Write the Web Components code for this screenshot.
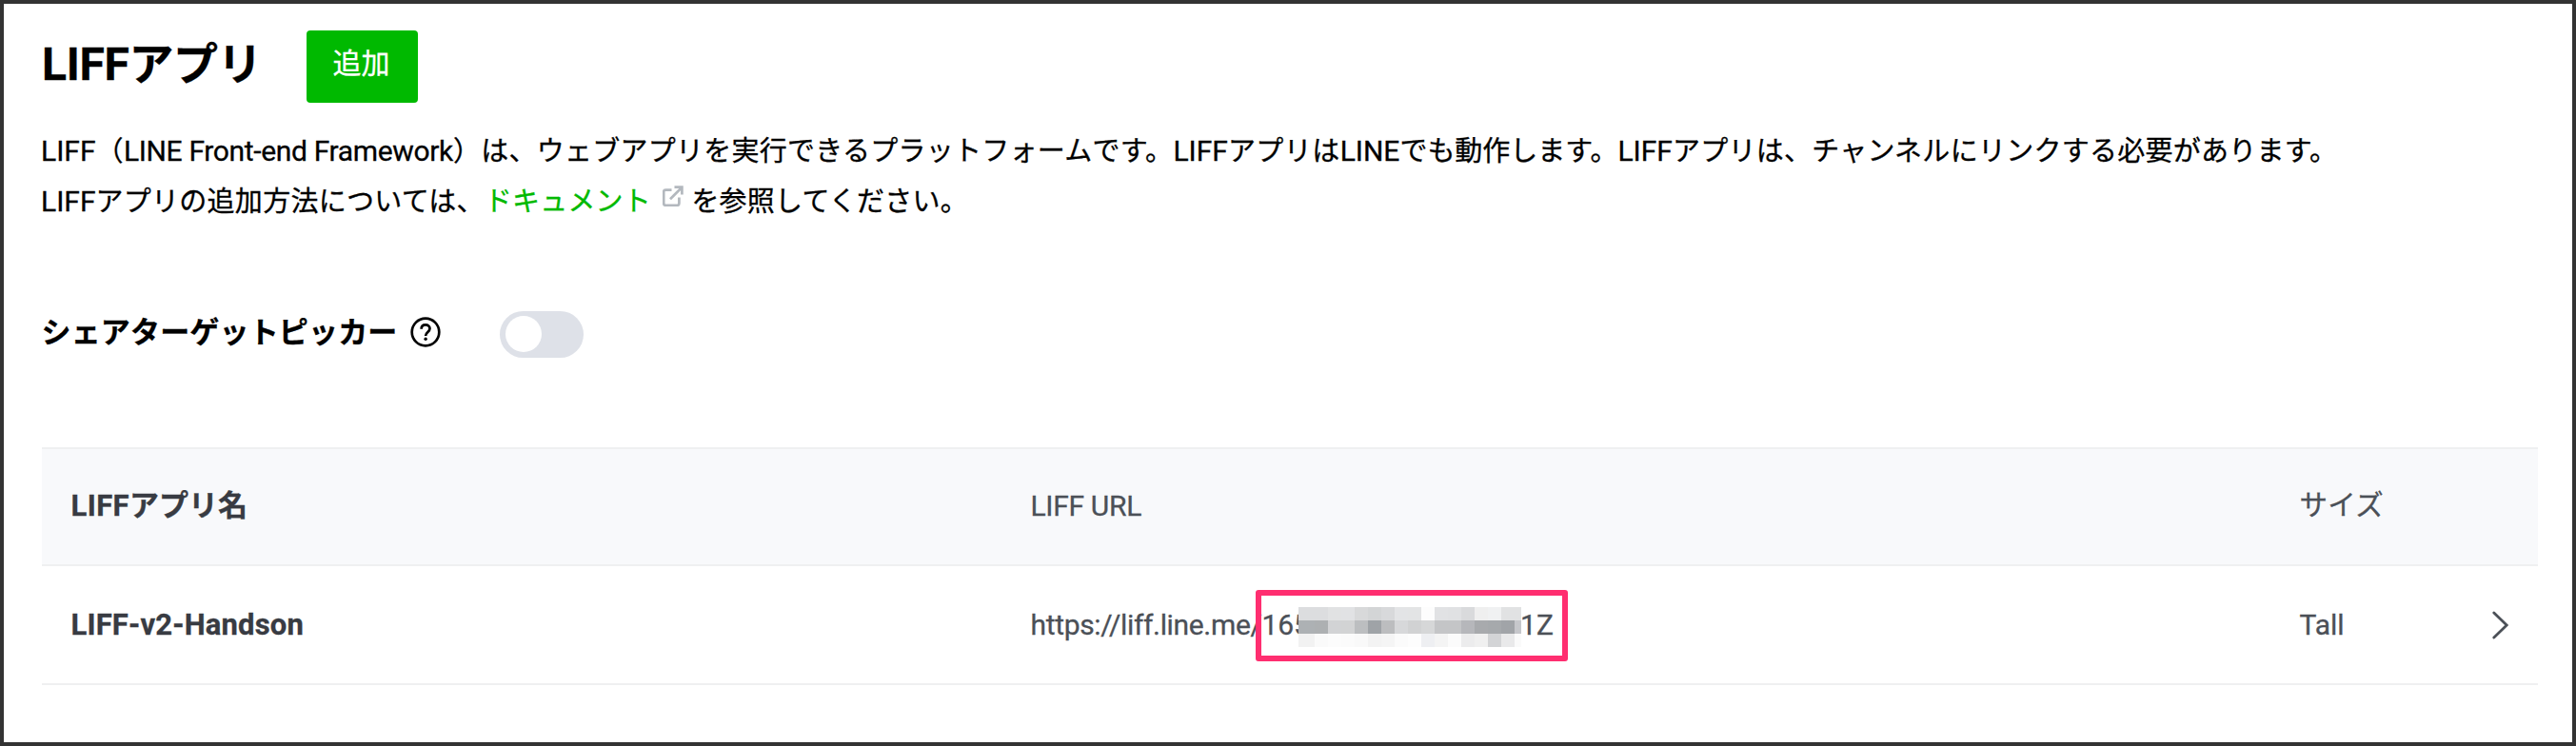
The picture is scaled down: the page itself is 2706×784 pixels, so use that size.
<!DOCTYPE html>
<html lang="ja">
<head>
<meta charset="utf-8">
<title>LIFFアプリ</title>
<style>
  html, body { margin: 0; height: 100%; }
  body { font-family: Roboto, "Noto Sans CJK JP", sans-serif; background: #fff; color: #000; }
</style>
</head>
<body>
<liff-page></liff-page>
<script>
// Inline text run whose tracking is set so that it takes the given width.
class TextRun extends HTMLElement {
  constructor() {
    super();
    this.attachShadow({ mode: 'open' }).innerHTML =
      '<style>:host{display:inline;white-space:pre;line-height:1;-webkit-text-stroke:.3px currentColor}</style><slot></slot>';
  }
  connectedCallback() {
    if (this.hasAttribute('size')) this.style.fontSize = this.getAttribute('size') + 'px';
    const target = parseFloat(this.getAttribute('w'));
    if (!target) return;
    const natural = this.getBoundingClientRect().width;
    const count = [...this.textContent].length;
    this.style.letterSpacing = ((target - natural) / count).toFixed(3) + 'px';
  }
}

class AddButton extends HTMLElement {
  constructor() {
    super();
    this.attachShadow({ mode: 'open' }).innerHTML = `
      <style>
        :host{display:block}
        button{display:block;box-sizing:border-box;width:117px;height:76px;margin:0;padding:0 1px 6px 0;border:0;border-radius:4px;
          background:#00b900;color:#fff;font:400 30px/70px Roboto,"Noto Sans CJK JP",sans-serif;text-align:center;-webkit-text-stroke:.3px #fff}
      </style><button><slot></slot></button>`;
  }
}

class ToggleSwitch extends HTMLElement {
  constructor() {
    super();
    this.attachShadow({ mode: 'open' }).innerHTML = `
      <style>
        :host{display:flex;align-items:center;box-sizing:border-box;width:88px;height:49px;padding-left:6px;border-radius:25px;background:#dee1e8}
        i{display:block;width:38px;height:38px;border-radius:50%;background:#fff}
      </style><i></i>`;
  }
}

class HelpIcon extends HTMLElement {
  constructor() {
    super();
    this.attachShadow({ mode: 'open' }).innerHTML = `
      <style>:host,svg{display:block;width:32px;height:32px}</style>
      <svg viewBox="0 0 32 32" fill="none" stroke="#000" stroke-width="2.7">
        <circle cx="16" cy="16" r="14.3"/>
        <path d="M11.6 12.8C11.6 9.9 13.4 8.3 16 8.3s4.5 1.6 4.5 4c0 3.5-4.4 3.9-4.4 7.6"/>
        <circle cx="16.1" cy="23.3" r="1.7" fill="#000" stroke="none"/>
      </svg>`;
  }
}

class ExternalIcon extends HTMLElement {
  constructor() {
    super();
    this.attachShadow({ mode: 'open' }).innerHTML = `
      <style>:host{display:inline-block;width:22px;height:22px;vertical-align:5.500px;line-height:0}svg{display:block}</style>
      <svg width="22" height="22" viewBox="0 0 22 22" fill="none" stroke="#b3b8be" stroke-width="2.7">
        <path d="M9.500 4.600H3.200q-2 0-2 2v12.200q0 2 2 2h12.200q2 0 2-2v-6.300"/>
        <path d="M8 14.200L20.200 2M12.500 1.700H20.400V9.500"/>
      </svg>`;
  }
}

class ChevronIcon extends HTMLElement {
  constructor() {
    super();
    this.attachShadow({ mode: 'open' }).innerHTML = `
      <style>:host,svg{display:block;width:18px;height:30px}</style>
      <svg viewBox="0 0 18 30" fill="none" stroke="#4b5057" stroke-width="2.8" stroke-linecap="round">
        <path d="M1.800 1.900L15.200 15L1.800 28.100"/>
      </svg>`;
  }
}

// Pixelated block hiding part of an identifier, one grid cell per mosaic tile.
class MosaicMask extends HTMLElement {
  constructor() {
    super();
    const tiles = [
      'dcdddf dcdddf e1e2e3 e1e2e4 d8d9da d3d5d6 d8d9db e3e4e6 e3e4e5 fdfdfd e1e2e4 e0e1e3 d9dadc efefef f0f1f2 e1e2e3 e1e2e3',
      'adb1b4 adb0b2 d2d3d5 d2d3d4 bcbec0 9fa3a7 bcbdbf d7d8da d1d2d3 d6d7d8 c4c5c7 c4c5c7 b6b7bb a8aaad a6a9ac a1a4a8 c6c7cb',
      'f2f2f2 fafafa fcfcfc fbfbfb f9f9f9 f3f3f3 f5f5f5 fbfbfb fdfdfd eeeff2 f4f4f4 fbfbfb ececed f0f0f0 d3d4d6 e9e9ea fafafa'
    ].join(' ').split(' ');
    this.attachShadow({ mode: 'open' }).innerHTML = `
      <style>:host{display:grid;grid-template:repeat(3,14px)/17px repeat(15,14px) 7px}</style>` +
      tiles.map(c => `<i style="background:#${c}"></i>`).join('');
  }
}

class LiffTable extends HTMLElement {
  constructor() {
    super();
    this.attachShadow({ mode: 'open' }).innerHTML = `
      <style>
        :host{display:block;color:#4b5057;font-size:30px}
        .row{display:grid;grid-template-columns:1008px 1333px 202px 1fr;box-sizing:border-box;padding-left:30.500px;border-bottom:2px solid #eff0f1}
        .head{height:125px;border-top:2px solid #eff0f1;background:#f8f9fb;line-height:119px}
        .body{height:125px;line-height:123px}
        .name{font-weight:700;color:#383b42;font-size:31px}
        .url{position:relative;white-space:nowrap}
        .box{position:absolute;left:236.500px;top:25px;width:328px;height:75px;box-sizing:border-box;border:6px solid #ff2e70;border-radius:3px}
        mosaic-mask{position:absolute;left:281.500px;top:43.500px}
        .end{position:absolute;left:514.500px;top:0}
        chevron-icon{margin-top:47px}
        .raise{display:inline-block;line-height:117px;vertical-align:top}
      </style>
      <div class="row head">
        <div class="name"><text-run w="61.500">LIFF</text-run><text-run w="124" size="31">アプリ名</text-run></div>
        <div><text-run w="116.500">LIFF URL</text-run></div>
        <div><span class="raise"><text-run w="88.500" size="29.500">サイズ</text-run></span></div>
        <div></div>
      </div>
      <div class="row body">
        <div class="name"><text-run w="244.500">LIFF-v2-Handson</text-run></div>
        <div class="url"><text-run w="243">https://liff.line.me/</text-run><text-run w="50.400">165</text-run>
          <mosaic-mask></mosaic-mask><span class="end"><text-run w="35">1Z</text-run></span><div class="box"></div></div>
        <div><text-run w="47">Tall</text-run></div>
        <chevron-icon></chevron-icon>
      </div>`;
  }
}

class LiffPage extends HTMLElement {
  constructor() {
    super();
    this.attachShadow({ mode: 'open' }).innerHTML = `
      <style>
        :host{display:block;box-sizing:border-box;height:784px;overflow:hidden;border:4px solid #333;padding:28px 36px 0 40px;background:#fff}
        header{display:flex;align-items:flex-start;height:76px}
        h1{margin:0;width:277.500px;box-sizing:border-box;font:inherit;font-weight:700;font-size:48px;line-height:72px;white-space:nowrap}
        .intro{margin:24.400px 0 0 -1px;font-size:30px;line-height:53px;white-space:nowrap}
        .intro div{height:53px}
        .link{color:#00b900}
        external-icon{margin:0 8px 0 12.500px}
        .picker{display:flex;align-items:flex-start;margin-top:88.600px;height:49px;line-height:45px;font-size:31px;font-weight:700}
        .picker .label{width:386px;margin-left:-.500px;white-space:nowrap}
        help-icon{margin:6px 62.500px 0 1px}
        liff-table{margin-top:94px}
      </style>
      <header>
        <h1><text-run w="91.500">LIFF</text-run><text-run w="139.500" size="47">アプリ</text-run></h1>
        <add-button>追加</add-button>
      </header>
      <div class="intro">
        <div><text-run w="57.500">LIFF</text-run><text-run w="29.400" size="29">（</text-run><text-run w="346">LINE Front-end Framework</text-run><text-run w="756.500" size="29">）は、ウェブアプリを実行できるプラットフォームです。</text-run><text-run w="57.500">LIFF</text-run><text-run w="117.800" size="29">アプリは</text-run><text-run w="62.700">LINE</text-run><text-run w="229" size="29">でも動作します。</text-run><text-run w="57.500">LIFF</text-run><text-run w="698.500" size="29">アプリは、チャンネルにリンクする必要があります。</text-run></div>
        <div><text-run w="57.500">LIFF</text-run><text-run w="408.400" size="29">アプリの追加方法については、</text-run><span class="link"><text-run w="175" size="29">ドキュメント</text-run></span><external-icon></external-icon><text-run w="290.500" size="29">を参照してください。</text-run></div>
      </div>
      <div class="picker">
        <div class="label"><text-run w="374" size="31">シェアターゲットピッカー</text-run></div>
        <help-icon></help-icon>
        <toggle-switch></toggle-switch>
      </div>
      <liff-table></liff-table>`;
  }
}

customElements.define('add-button', AddButton);
customElements.define('toggle-switch', ToggleSwitch);
customElements.define('help-icon', HelpIcon);
customElements.define('external-icon', ExternalIcon);
customElements.define('chevron-icon', ChevronIcon);
customElements.define('mosaic-mask', MosaicMask);
customElements.define('liff-table', LiffTable);
customElements.define('liff-page', LiffPage);
customElements.define('text-run', TextRun);
</script>
</body>
</html>
